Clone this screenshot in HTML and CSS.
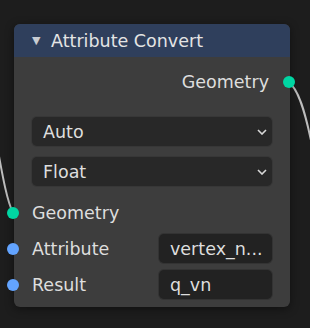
FILE: index.html
```html
<!DOCTYPE html>
<html lang="en">
<head>
    <meta charset="UTF-8">
    <title>Attribute Convert</title>
    <link rel="stylesheet" href="styles.css">
</head>
<body>
    <svg class="wires" width="310" height="328">
        <path d="M -4 140 C 2 172, 6 198, 13 213" />
        <path d="M 289 83 C 298 88, 305 110, 313 150" />
    </svg>

    <div class="node">
        <div class="node-head">
            <span class="arrow">&#9660;</span>
            <span class="title">Attribute Convert</span>
        </div>

        <div class="node-body">
            <div class="row out-row">
                <span>Geometry</span>
                <span class="socket out geo"></span>
            </div>

            <div class="dropdown first">
                <span>Auto</span>
                <svg class="chevron" width="10" height="6" viewBox="0 0 10 6"><path d="M1 1 L5 5 L9 1" /></svg>
            </div>
            <div class="dropdown">
                <span>Float</span>
                <svg class="chevron" width="10" height="6" viewBox="0 0 10 6"><path d="M1 1 L5 5 L9 1" /></svg>
            </div>

            <div class="row in-row geo-row">
                <span class="socket in geo"></span>
                <span>Geometry</span>
            </div>

            <div class="row field-row attr-row">
                <span class="socket in str"></span>
                <span>Attribute</span>
                <div class="field">vertex_n...</div>
            </div>
            <div class="row field-row res-row">
                <span class="socket in str"></span>
                <span>Result</span>
                <div class="field">q_vn</div>
            </div>
        </div>
    </div>
</body>
</html>
```

FILE: styles.css
```css
/* General */
body {
    margin: 0;
    width: 310px;
    height: 328px;
    overflow: hidden;
    background-color: #1d1d1d;
    font-family: 'DejaVu Sans', sans-serif;
    font-size: 17.5px;
    color: #dedede;
    position: relative;
}

/* Wires sit behind the node */
.wires {
    position: absolute;
    left: 0;
    top: 0;
}
.wires path {
    fill: none;
    stroke: #bdbdbd;
    stroke-width: 2;
}

/* Node frame */
.node {
    position: relative;
    margin: 24px 0 0 14px;
    width: 276px;
    height: 283px;
    background: #3d3d3d;
    border-radius: 6px;
    box-shadow: 0 2px 10px rgba(0, 0, 0, 0.45);
}
.node-head {
    height: 33px;
    display: flex;
    align-items: center;
    padding-left: 18px;
    background: #2f3f5c;
    border-radius: 6px 6px 0 0;
}
.arrow {
    font-size: 11px;
    color: #c9ccd2;
    width: 19px;
    margin-top: -1px;
}
.title {
    color: #e4e4e4;
}

/* Body */
.node-body {
    padding: 14px 18px 0;
    display: flex;
    flex-direction: column;
}
.row {
    position: relative;
    display: flex;
    align-items: center;
    height: 22px;
}
.out-row {
    justify-content: flex-end;
    padding-right: 3px;
}
.geo-row {
    margin-top: 16px;
}
.field-row {
    height: 29px;
}
.attr-row {
    margin-top: 10px;
}
.res-row {
    margin-top: 7px;
}

/* Sockets */
.socket {
    position: absolute;
    width: 12px;
    height: 12px;
    border-radius: 50%;
    top: 50%;
    margin-top: -6px;
}
.socket.in {
    left: -25px;
}
.socket.out {
    right: -23px;
}
.geo {
    background: #00d6a3;
}
.str {
    background: #63a4ff;
}

/* Dropdowns */
.dropdown {
    height: 29px;
    display: flex;
    align-items: center;
    justify-content: space-between;
    padding: 0 5px 0 11px;
    margin-top: 11px;
    background: #282828;
    border-radius: 5px;
    box-shadow: 0 0 0 1px #373737;
}
.dropdown.first {
    margin-top: 24px;
}
.chevron path {
    fill: none;
    stroke: #d8d8d8;
    stroke-width: 1.6;
}

/* Text fields */
.field {
    margin-left: auto;
    width: 113px;
    height: 29px;
    box-sizing: border-box;
    padding-left: 11px;
    display: flex;
    align-items: center;
    background: #222222;
    border-radius: 5px;
    box-shadow: 0 0 0 1px #333333;
}
```
